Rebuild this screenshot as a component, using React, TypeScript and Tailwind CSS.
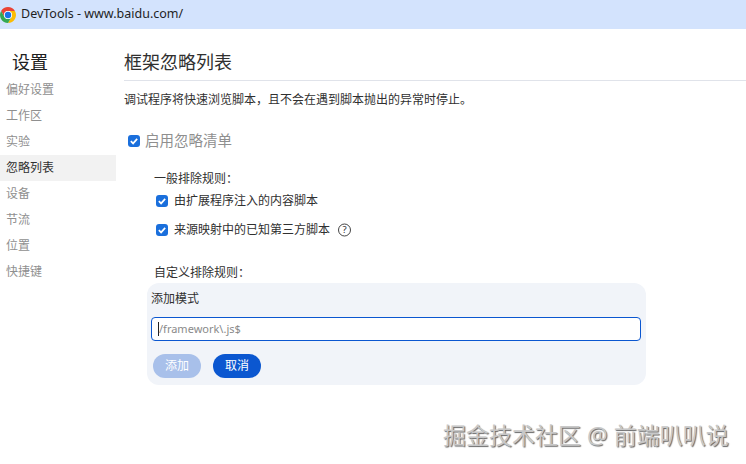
import React from "react";

const fontStack = { fontFamily: '"Noto Sans", "Noto Sans CJK SC", sans-serif' };

const ChromeIcon = () => (
  <svg width="16" height="16" viewBox="4 4 40 40" className="shrink-0">
    <path d="M6.68 14A20 20 0 0 1 41.32 14H24A10 10 0 0 0 15.34 29z" fill="#ea4335" />
    <path d="M41.32 14A20 20 0 0 1 24 44L32.66 29A10 10 0 0 0 24 14z" fill="#fbbc04" />
    <path d="M24 44A20 20 0 0 1 6.68 14L15.34 29A10 10 0 0 0 32.66 29z" fill="#34a853" />
    <circle cx="24" cy="24" r="10" fill="#fff" />
    <circle cx="24" cy="24" r="8" fill="#1a73e8" />
  </svg>
);

const Check = ({ size = 12 }: { size?: number }) => (
  <span
    className="flex shrink-0 items-center justify-center rounded-[3px] bg-[#1a6fdc]"
    style={{ width: size, height: size }}
  >
    <svg width={size - 2} height={size - 2} viewBox="0 0 12 12" fill="none">
      <path d="M2.2 6.2 4.9 8.9 9.8 3.4" stroke="#fff" strokeWidth="2" />
    </svg>
  </span>
);

const navItems = ["偏好设置", "工作区", "实验", "忽略列表", "设备", "节流", "位置", "快捷键"];

export default function App() {
  return (
    <div className="relative h-[464px] w-[746px] overflow-hidden bg-white text-[#303030]" style={fontStack}>
      {/* 标题栏 */}
      <div className="flex h-[29px] items-center gap-[5px] bg-[#d3e3fd]">
        <ChromeIcon />
        <span className="text-[12.5px] text-[#1f1f1f]">DevTools - www.baidu.com/</span>
      </div>

      <div className="flex">
        {/* 侧边栏 */}
        <aside className="w-[116px] shrink-0">
          <h2 className="pl-3 pt-[20px] text-[18px] leading-[26px] text-[#202020]">设置</h2>
          <ul className="mt-[2px]">
            {navItems.map((item) => (
              <li
                key={item}
                className={`h-[26px] pl-[6px] text-[12px] leading-[26px] ${
                  item === "忽略列表" ? "bg-[#f2f2f2] text-[#303030]" : "text-[#8f8f8f]"
                }`}
              >
                {item}
              </li>
            ))}
          </ul>
        </aside>

        {/* 主内容 */}
        <main className="flex-1 pl-2 pt-[20px]">
          <div className="h-[32px] border-b border-[#e0e3ea] text-[18px] leading-[26px] text-[#303030]">
            框架忽略列表
          </div>
          <p className="mt-[10px] text-[12px] leading-[18px]">
            调试程序将快速浏览脚本，且不会在遇到脚本抛出的异常时停止。
          </p>

          <label className="mt-[22px] flex h-[20px] items-center gap-[5px] pl-[4px] text-[14.5px] text-[#8f8f8f]">
            <Check />
            启用忽略清单
          </label>

          <div className="mt-[19px] pl-[30px] text-[12px] leading-[18px]">一般排除规则：</div>
          <label className="mt-[4px] flex h-[18px] items-center gap-[6px] pl-[32px] text-[12px]">
            <Check />
            由扩展程序注入的内容脚本
          </label>
          <label className="mt-[11px] flex h-[18px] items-center gap-[6px] pl-[32px] text-[12px]">
            <Check />
            来源映射中的已知第三方脚本
            <span className="ml-[2px] flex h-[13px] w-[13px] -translate-y-[0.5px] items-center justify-center rounded-full border border-[#444] text-[9.5px] leading-none">
              ?
            </span>
          </label>

          <div className="mt-[25px] pl-[30px] text-[12px] leading-[18px]">自定义排除规则：</div>

          <div className="ml-[23px] mt-[1px] h-[102px] w-[499px] rounded-[12px] bg-[#f1f4f9] px-[4px] pt-[5px]">
            <div className="pt-[2px] text-[12px] leading-[18px]">添加模式</div>
            <div className="mt-[9px] flex h-[24px] w-[490px] items-center rounded-[4px] border border-[#0b57d0] bg-white pl-[6px] text-[11px] text-[#8a8a8a]">
              <span className="h-[14px] w-px bg-[#222]" />
              /framework\.js$
            </div>
            <div className="mt-[13px] flex gap-3 pl-[2px]">
              <button className="h-[24px] w-[48px] rounded-full bg-[#a8c0ea] text-[12px] text-white">添加</button>
              <button className="h-[24px] w-[48px] rounded-full bg-[#0b57d0] text-[12px] text-white">取消</button>
            </div>
          </div>
        </main>
      </div>

      {/* 水印 */}
      <div className="absolute left-[443px] top-[420px] whitespace-pre text-[23px] leading-[30px] text-[#c8c8c8] [text-shadow:1px_1px_1px_#666]">
        掘金技术社区 @ 前端叭叭说
      </div>
    </div>
  );
}
